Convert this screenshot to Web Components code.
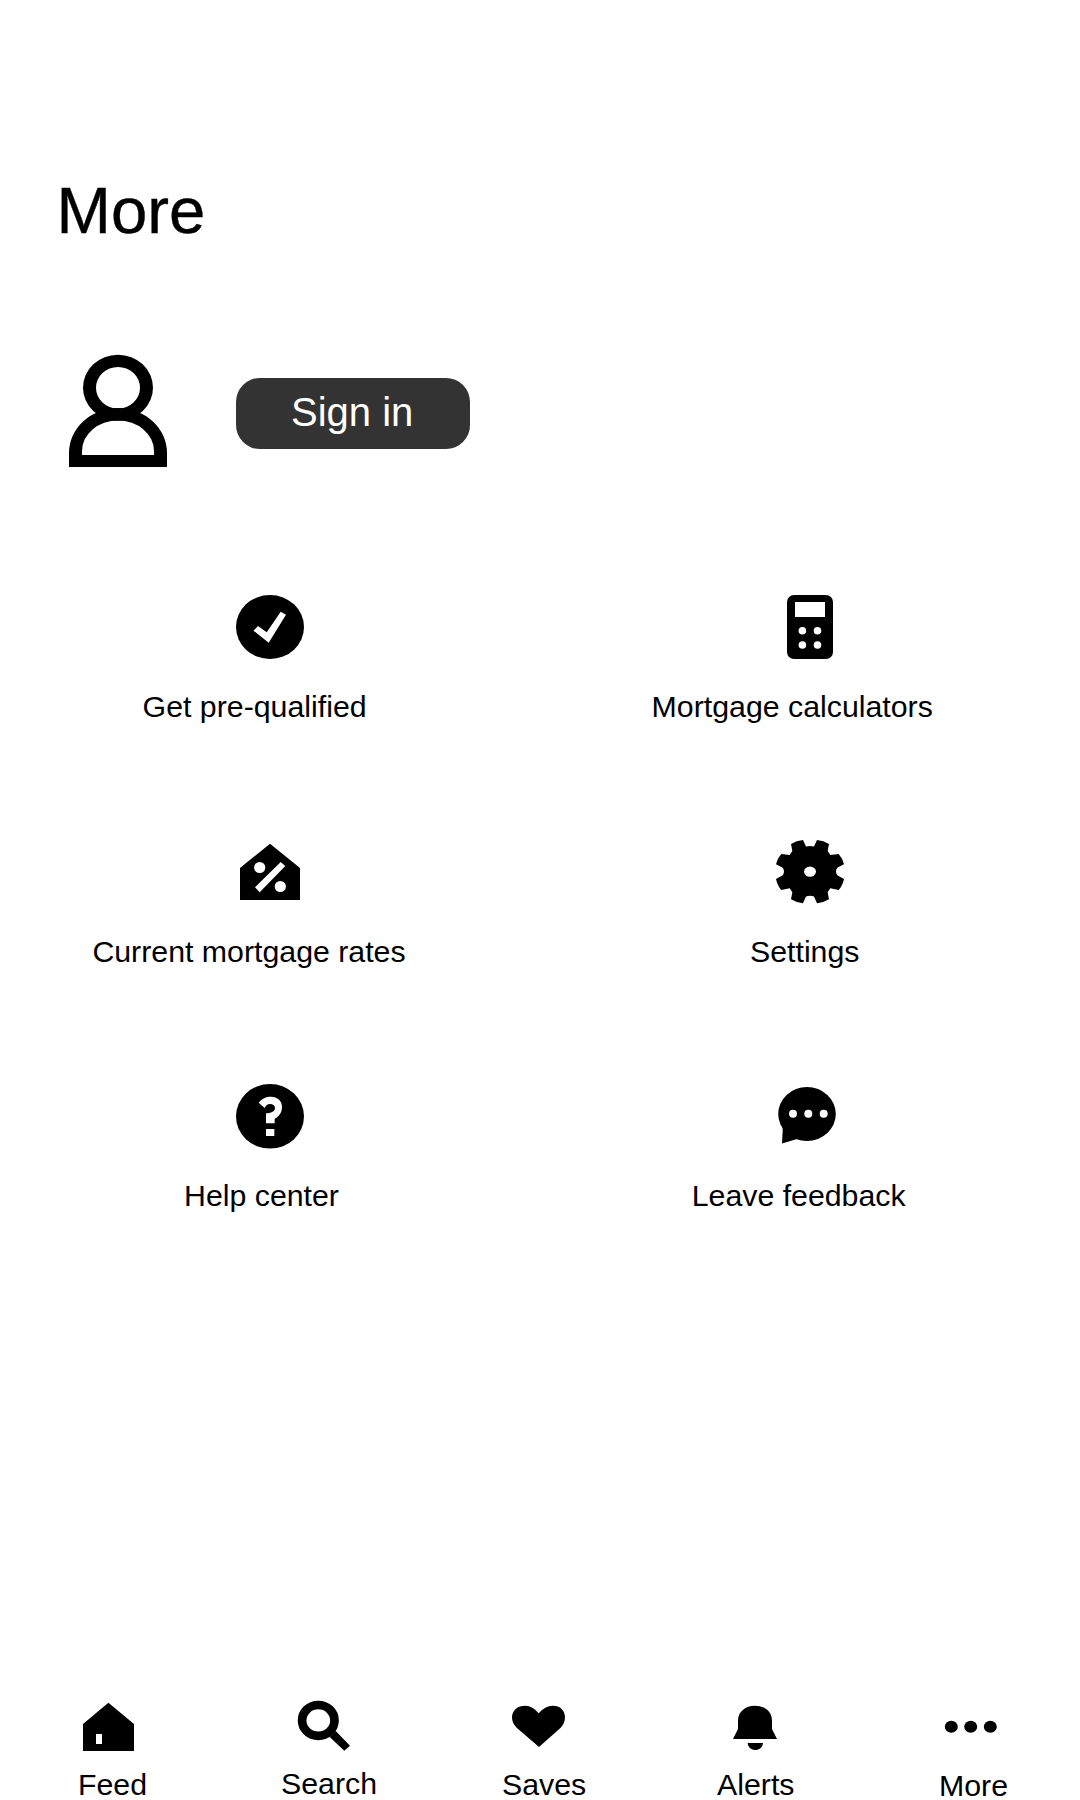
<!DOCTYPE html>
<html lang="en">
<head>
<meta charset="utf-8">
<title>More</title>
<style>
html,body{margin:0;padding:0;background:#fff}
body{width:1080px;height:1800px;overflow:hidden;font-family:"Liberation Sans",Arial,sans-serif;color:#000}
</style>
</head>
<body>
<more-screen></more-screen>
<script>
const shapes = {
  user: ['68 354 100 114', `<path fill-rule="evenodd" d="M83 387.7a35 33 0 0 1 70 0a35 33 0 0 1-70 0ZM96 387.7a22 20.8 0 0 0 44 0a22 20.8 0 0 0-44 0Z"/><path fill-rule="evenodd" d="M69 467V453A49 45 0 0 1 167 453V467ZM82 455H154V451A36 30.5 0 0 0 82 451Z"/>`],
  check: ['235 594 70 66', `<ellipse cx="270" cy="627" rx="34" ry="32"/><path fill="#fff" d="M253.5 630.7L258 626L266.7 632.3L280.7 611.7L286 614.7L268.7 642.7Z"/>`],
  calc: ['775 594 70 66', `<rect x="787" y="595" width="46" height="64" rx="7"/><g fill="#fff"><rect x="795" y="602" width="30" height="15"/><circle cx="802.4" cy="630.8" r="3.8"/><circle cx="817.5" cy="630.8" r="3.8"/><circle cx="802.4" cy="645" r="3.8"/><circle cx="817.5" cy="645" r="3.8"/></g>`],
  rates: ['235 839 70 66', `<path d="M270 843.7L300 868V900H240V868Z"/><g fill="#fff"><circle cx="259.7" cy="867.5" r="5.6"/><circle cx="280.3" cy="886.5" r="5.6"/><path d="M255 887.3L280.7 862L285.3 866L259.7 892.3Z"/></g>`],
  gear: ['775 839 70 66', `<g transform="translate(810 871.6) scale(.33333)"><path d="M-12-75Q0-78 12-75L21-95Q41-93 57-83L53-62L61-50L86-53Q98-40 102-22L83-12Q78-7 78 0Q78 7 83 12L102 22Q98 42 86 55L61 50L53 62L57 83Q41 93 21 95L12 75Q0 70-12 75L-21 95Q-41 93-57 83L-53 62L-61 50L-86 55Q-98 42-102 22L-83 12Q-78 7-78 0Q-78-7-83-12L-102-22Q-98-40-86-53L-61-50L-53-62L-57-83Q-41-93-21-95Z"/><ellipse fill="#fff" rx="18" ry="15.5"/></g>`],
  help: ['235 1083 70 66', `<ellipse cx="270" cy="1116.3" rx="34" ry="32.3"/><g fill="#fff" transform="translate(170 1070) scale(.33333)"><path d="M266 98C276 85 288 80 303 80C322 80 336 93 336 110C336 128 326 140 314 146V160H288V130C302 130 315 125 315 114C315 106 308 102 300 102C292 102 288 106 284 114Z"/><rect x="288" y="177" width="25" height="21"/></g>`],
  feedback: ['775 1083 70 66', `<ellipse cx="807" cy="1114" rx="28.8" ry="27"/><path d="M779 1118Q783 1124 782.7 1130L782 1143.5L797 1139L806 1128Z"/><g fill="#fff"><circle cx="793" cy="1113.7" r="4"/><circle cx="808.3" cy="1113.7" r="4"/><circle cx="823.7" cy="1113.7" r="4"/></g>`],
  home: ['80 1700 60 54', `<path d="M108.4 1702.7L134 1724V1751H83V1724Z"/><rect fill="#fff" x="96" y="1734" width="6" height="10"/>`],
  search: ['295 1700 60 54', `<ellipse cx="318.3" cy="1720.4" rx="16.2" ry="15.4" fill="none" stroke="#000" stroke-width="8.7"/><path d="M335.7 1731L350 1745.7L344.3 1750.7L329.7 1737Z"/>`],
  heart: ['509 1700 60 54', `<g transform="translate(490 1690) scale(.33333)"><path d="M147 171L80 113Q66 100 66 82C66 61 82 47 106 47Q128 47 146 70Q165 47 188 47C211 47 225 61 225 82Q225 100 212 113Z"/></g>`],
  bell: ['725 1700 60 54', `<g transform="translate(490 1690) scale(.33333)"><path d="M744 92C744 65 766 47 795 47S846 65 846 92V117L861 147H729L744 117Z"/><path d="M773 159H819C817 187 775 187 773 159Z"/></g>`],
  dots: ['941 1700 60 54', `<ellipse cx="951.3" cy="1726.8" rx="6.5" ry="6"/><ellipse cx="970.7" cy="1726.8" rx="6.5" ry="6"/><ellipse cx="990.3" cy="1726.8" rx="6.5" ry="6"/>`]
};

customElements.define('app-icon', class extends HTMLElement {
  connectedCallback() {
    const [box, body] = shapes[this.getAttribute('name')];
    const [, , w, h] = box.split(' ');
    this.attachShadow({mode: 'open'}).innerHTML =
      `<style>:host{display:block;flex:none;width:${w}px;height:${h}px}svg{display:block}</style><svg width="${w}" height="${h}" viewBox="${box}">${body}</svg>`;
  }
});

/* Icon stacked over a caption; attributes carry the inset of each inside its cell. */
class IconItem extends HTMLElement {
  connectedCallback() {
    const a = n => this.getAttribute(n) || 0;
    this.attachShadow({mode: 'open'}).innerHTML =
      `<style>:host{display:flex;flex-direction:column;align-items:flex-start;min-width:0}
      app-icon{margin-left:${a('icon-inset')}px}
      span{display:block;white-space:nowrap;font-size:30.3px;line-height:${this.line}px;height:${this.line}px;margin:calc(${this.gap}px + ${a('drop')}px) 0 0 ${a('text-inset')}px}</style>
      <app-icon name="${a('icon')}"></app-icon><span><slot></slot></span>`;
  }
}
customElements.define('menu-tile', class extends IconItem { get gap() { return 27; } get line() { return 40; } });
customElements.define('nav-item', class extends IconItem { get gap() { return 14; } get line() { return 34; } });

customElements.define('sign-in-button', class extends HTMLElement {
  connectedCallback() {
    this.attachShadow({mode: 'open'}).innerHTML =
      `<style>:host{display:block}button{display:block;box-sizing:border-box;width:234px;height:71px;border:0;border-radius:24px;background:#333;color:#fff;font:40px/46px "Liberation Sans",Arial,sans-serif;padding:0 0 3px 55px;text-align:left;white-space:nowrap}</style><button><slot></slot></button>`;
  }
});

customElements.define('more-screen', class extends HTMLElement {
  connectedCallback() {
    this.attachShadow({mode: 'open'}).innerHTML = `
<style>
:host{display:flex;flex-direction:column;width:1080px;height:1800px;background:#fff;overflow:hidden}
h1{margin:171px 0 0 56.5px;font-weight:400;font-size:65.3px;line-height:80px;height:80px;-webkit-text-stroke:.4px #000}
.profile{display:flex;align-items:flex-start;padding:103px 0 0 68px;height:114px}
sign-in-button{margin:24px 0 0 68px}
main{display:grid;grid-template-columns:540px 540px;grid-template-rows:245px 244px 244px;padding-top:126px}
nav{display:grid;grid-template-columns:216px 216px 216px 216px 216px;margin-top:auto;height:100px}
</style>
<h1>More</h1>
<section class="profile"><app-icon name="user"></app-icon><sign-in-button>Sign in</sign-in-button></section>
<main>
<menu-tile icon="check" icon-inset="235" text-inset="142.6">Get pre-qualified</menu-tile>
<menu-tile icon="calc" icon-inset="235" text-inset="111.6">Mortgage calculators</menu-tile>
<menu-tile icon="rates" icon-inset="235" text-inset="92.4">Current mortgage rates</menu-tile>
<menu-tile icon="gear" icon-inset="235" text-inset="210">Settings</menu-tile>
<menu-tile icon="help" icon-inset="235" text-inset="184">Help center</menu-tile>
<menu-tile icon="feedback" icon-inset="235" text-inset="151.7">Leave feedback</menu-tile>
</main>
<nav>
<nav-item icon="home" icon-inset="80" text-inset="78">Feed</nav-item>
<nav-item icon="search" icon-inset="79" text-inset="65" drop="-1">Search</nav-item>
<nav-item icon="heart" icon-inset="77" text-inset="70">Saves</nav-item>
<nav-item icon="bell" icon-inset="77" text-inset="69">Alerts</nav-item>
<nav-item icon="dots" icon-inset="77" text-inset="75" drop="1">More</nav-item>
</nav>`;
  }
});
</script>
</body>
</html>
